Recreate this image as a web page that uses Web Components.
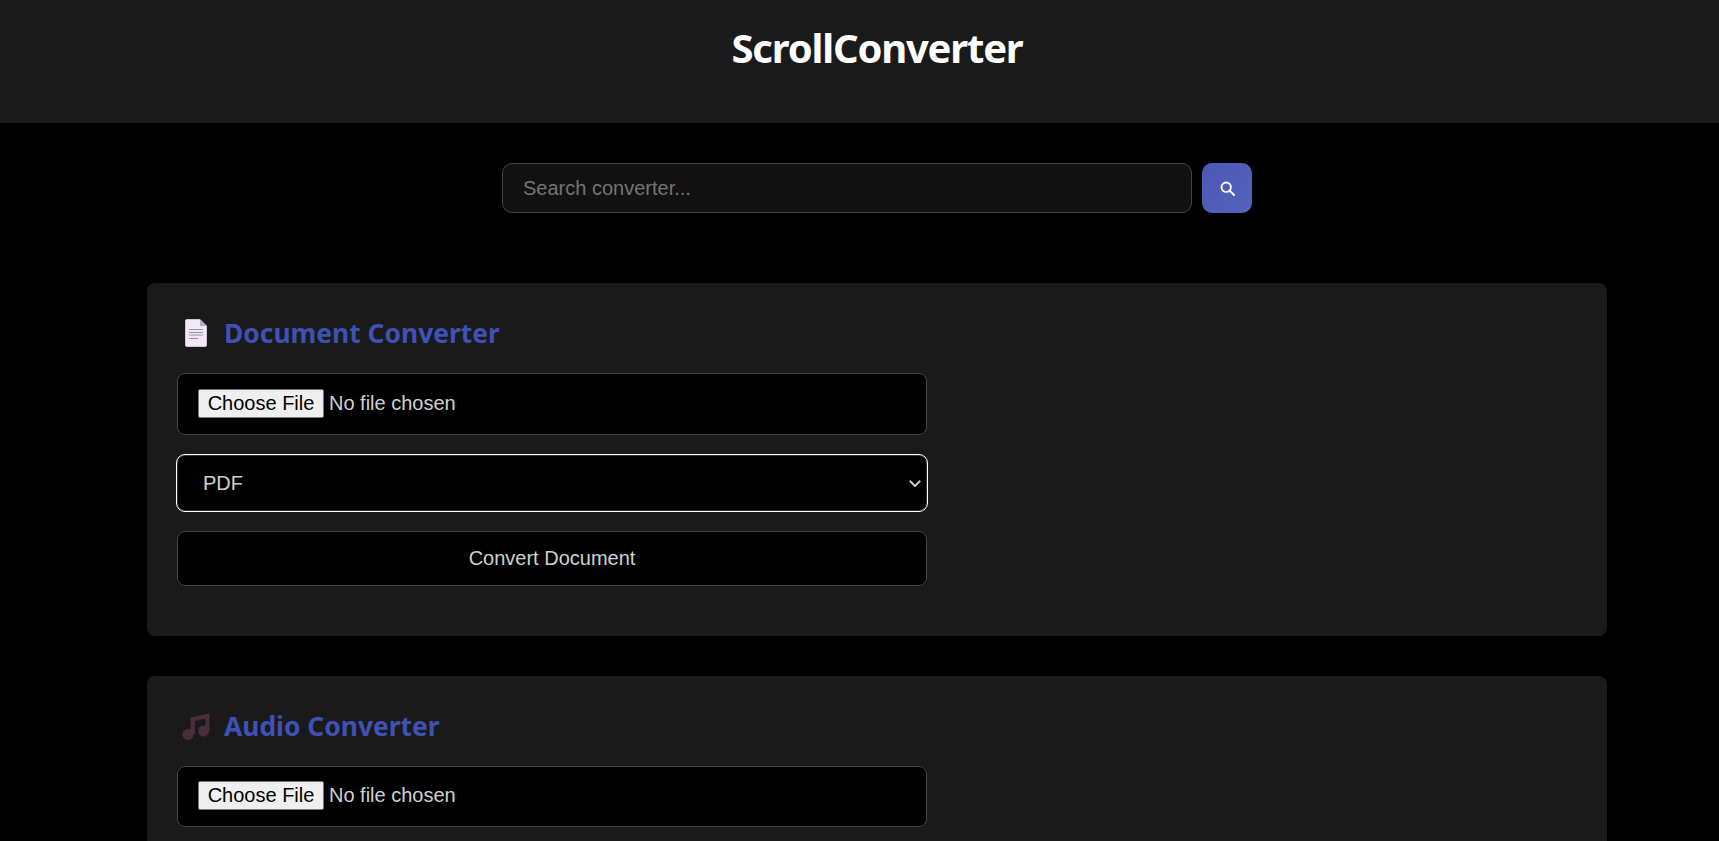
<!DOCTYPE html>
<html lang="en">
<head>
<meta charset="utf-8">
<title>ScrollConverter</title>
<style>
  html { overflow: hidden; background: #000; }
  body { margin: 0; width: 1754px; height: 841px; overflow: hidden; background: #000; color: #d0d0d0; font-family: "Liberation Sans", Arial, sans-serif; }
</style>
</head>
<body>
<app-header>ScrollConverter</app-header>
<search-bar placeholder="Search converter..."></search-bar>
<main-column>
  <converter-card heading="Document Converter">
    <svg slot="icon" viewBox="0 0 22 28" width="22" height="28">
      <path d="M2 0.5H15L21.5 7V26a1.5 1.5 0 0 1-1.5 1.5H2A1.5 1.5 0 0 1 .5 26V2A1.5 1.5 0 0 1 2 .5Z" fill="#f0e8f6" stroke="#cfc4d8"/>
      <path d="M15 .5V7H21.5Z" fill="#b5abc0"/>
      <path d="M4 10.5H18M4 13.5H18M4 16H18M4 19.5H13" stroke="#98929f" stroke-width="1"/>
    </svg>
    <file-field></file-field>
    <format-select><option>PDF</option></format-select>
    <action-button>Convert Document</action-button>
  </converter-card>
  <converter-card heading="Audio Converter">
    <svg slot="icon" viewBox="0 0 28 27" width="28" height="27" fill="#4a2d3a">
      <circle cx="6" cy="21.5" r="5.5"/>
      <circle cx="21.5" cy="18" r="5.5"/>
      <path d="M8.5 4.5L27.5 .5V18H23.3V5.6L13 7.9V21.5H8.5Z"/>
    </svg>
    <file-field style="height: 61px"></file-field>
  </converter-card>
</main-column>

<script>
window.customElements.define(
  "app-header",
  class extends HTMLElement {
    constructor() {
      super();
      const root = this.attachShadow({ mode: "open" });
      root.innerHTML = `
    <style>
      :host {
        display: block;
        height: 123px;
        box-sizing: border-box;
        padding-top: 21px;
        background: #1a1a1a;
        text-align: center;
      }
      h1 {
        margin: 0;
        font: 700 40px/54px "Noto Sans", "Open Sans", sans-serif;
        letter-spacing: -1.2px;
        color: #fff;
      }
    </style>
    <h1><slot></slot></h1>
    `;
    }
  }
);

window.customElements.define(
  "search-bar",
  class extends HTMLElement {
    constructor() {
      super();
      const root = this.attachShadow({ mode: "open" });
      root.innerHTML = `
    <style>
      :host {
        display: flex;
        justify-content: center;
        gap: 10px;
        margin: 40px 0 70px;
      }
      input {
        width: 690px;
        height: 50px;
        box-sizing: border-box;
        padding: 0 20px;
        background: #111;
        border: 1px solid #444;
        border-radius: 10px;
        color: #d0d0d0;
        font: 20px "Liberation Sans", Arial, sans-serif;
        outline: none;
      }
      input::placeholder { color: #757575; opacity: 1; }
      button {
        width: 50px;
        height: 50px;
        padding: 0;
        border: 0;
        border-radius: 10px;
        background: linear-gradient(135deg, #4a59b6, #5462bc);
        display: flex;
        align-items: center;
        justify-content: center;
      }
    </style>
    <input type="text">
    <button aria-label="Search">
      <svg viewBox="0 0 16 16" width="15" height="15" fill="none" stroke="#fff">
        <circle cx="6.6" cy="6.6" r="5" stroke-width="2"/>
        <path d="M10.4 10.4L15 15" stroke-width="2.2" stroke-linecap="round"/>
      </svg>
    </button>
    `;
      root.querySelector("input").placeholder = this.getAttribute("placeholder") || "";
    }
  }
);

window.customElements.define(
  "main-column",
  class extends HTMLElement {
    constructor() {
      super();
      const root = this.attachShadow({ mode: "open" });
      root.innerHTML = `
    <style>
      :host {
        display: flex;
        flex-direction: column;
        gap: 40px;
        width: 1460px;
        margin: 0 auto;
      }
    </style>
    <slot></slot>
    `;
    }
  }
);

window.customElements.define(
  "converter-card",
  class extends HTMLElement {
    constructor() {
      super();
      const root = this.attachShadow({ mode: "open" });
      root.innerHTML = `
    <style>
      :host {
        display: block;
        padding: 30px 30px 50px;
        background: #1a1a1a;
        border-radius: 8px;
      }
      h2 {
        display: flex;
        align-items: center;
        gap: 14px;
        height: 40px;
        margin: 0 0 20px;
        font: 700 26.4px/40px "Noto Sans", "Open Sans", sans-serif;
        color: #3f51b5;
      }
      .icon {
        display: flex;
        justify-content: center;
        width: 28px;
        margin-left: 5px;
      }
      .fields {
        display: flex;
        flex-direction: column;
        gap: 20px;
        width: 750px;
      }
      ::slotted(svg) { display: block; }
    </style>
    <h2><span class="icon"><slot name="icon"></slot></span><span class="title"></span></h2>
    <div class="fields"><slot></slot></div>
    `;
      root.querySelector(".title").textContent = this.getAttribute("heading");
    }
  }
);

window.customElements.define(
  "file-field",
  class extends HTMLElement {
    constructor() {
      super();
      const root = this.attachShadow({ mode: "open" });
      root.innerHTML = `
    <style>
      :host {
        display: flex;
        align-items: center;
        height: 62px;
        box-sizing: border-box;
        padding: 0 20px 2px;
        background: #000;
        border: 1px solid #444;
        border-radius: 8px;
        color: #d0d0d0;
        font: 20px "Liberation Sans", Arial, sans-serif;
      }
      label { display: contents; }
      input { display: none; }
      .pick {
        box-sizing: border-box;
        width: 126px;
        height: 29px;
        margin-right: 5px;
        background: #efefef;
        border: 1px solid #767676;
        border-radius: 2px;
        color: #000;
        line-height: 27px;
        text-align: center;
      }
    </style>
    <label>
      <input type="file">
      <span class="pick">Choose File</span>
      <span>No file chosen</span>
    </label>
    `;
    }
  }
);

window.customElements.define(
  "format-select",
  class extends HTMLElement {
    constructor() {
      super();
      const root = this.attachShadow({ mode: "open" });
      root.innerHTML = `
    <style>
      :host { display: block; position: relative; }
      select {
        display: block;
        width: 100%;
        height: 56px;
        box-sizing: border-box;
        padding: 0 25px;
        appearance: none;
        background: #000;
        border: 1px solid #333;
        border-radius: 8px;
        outline: 1px solid #fff;
        color: #d0d0d0;
        font: 20px "Liberation Sans", Arial, sans-serif;
      }
      svg {
        position: absolute;
        top: 25px;
        right: 6px;
        pointer-events: none;
      }
    </style>
    <select></select>
    <svg viewBox="0 0 12 7" width="12" height="7" fill="none" stroke="#c8c8c8" stroke-width="2">
      <path d="M.8 .8L6 6L11.2 .8"/>
    </svg>
    `;
      root.querySelector("select").append(...this.querySelectorAll("option"));
    }
  }
);

window.customElements.define(
  "action-button",
  class extends HTMLElement {
    constructor() {
      super();
      const root = this.attachShadow({ mode: "open" });
      root.innerHTML = `
    <style>
      :host { display: block; }
      button {
        display: block;
        width: 100%;
        height: 55px;
        background: #000;
        border: 1px solid #444;
        border-radius: 8px;
        color: #d0d0d0;
        font: 20px "Liberation Sans", Arial, sans-serif;
      }
    </style>
    <button><slot></slot></button>
    `;
    }
  }
);
</script>
</body>
</html>
